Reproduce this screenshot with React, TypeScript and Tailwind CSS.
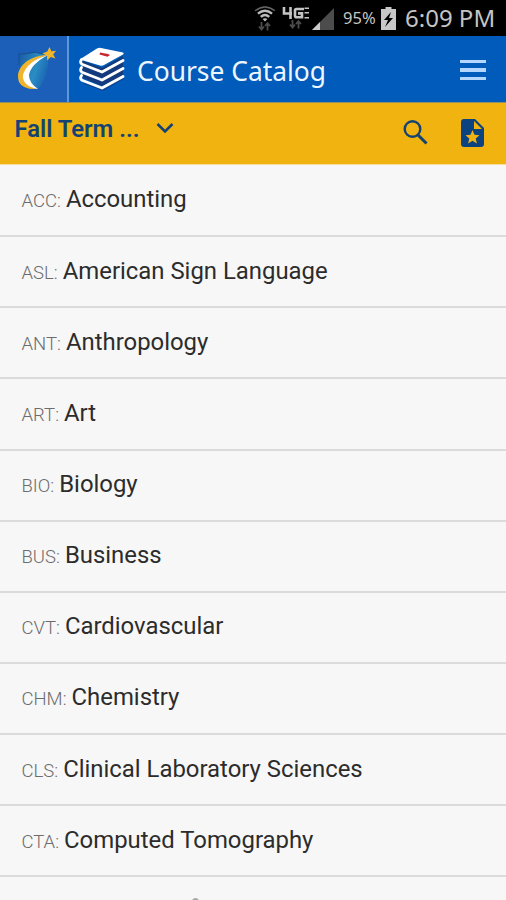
const subjects = [
  { code: 'ACC', name: 'Accounting' },
  { code: 'ASL', name: 'American Sign Language' },
  { code: 'ANT', name: 'Anthropology' },
  { code: 'ART', name: 'Art' },
  { code: 'BIO', name: 'Biology' },
  { code: 'BUS', name: 'Business' },
  { code: 'CVT', name: 'Cardiovascular' },
  { code: 'CHM', name: 'Chemistry' },
  { code: 'CLS', name: 'Clinical Laboratory Sciences' },
  { code: 'CTA', name: 'Computed Tomography' },
];

function DataArrows({ className }: { className: string }) {
  return (
    <svg className={className} width="13" height="9" viewBox="0 0 13 9" fill="none" stroke="#4c4c4c" strokeWidth="1.8">
      <path d="M3.5 0v7M1 4.5 3.5 7.5 6 4.5M9.5 8.5v-7M7 4 9.5 1.2 12 4" />
    </svg>
  );
}

function StatusBar() {
  return (
    <div className="flex h-9 shrink-0 items-center bg-black pl-[252px] font-['Noto_Sans',sans-serif] text-[#c4c4c4]">
      <div className="flex h-[25px] w-[25px] flex-col items-center">
        <svg width="24" height="17" viewBox="0 0 24 17" fill="none" stroke="#bdbdbd">
          <path d="M1.5 5Q12-3 22.5 5" stroke="#666" strokeWidth="1.5" />
          <path d="M4.5 8.2Q12 2 19.5 8.2M7.5 11.5Q12 7.5 16.5 11.5" strokeWidth="2.5" />
          <path d="m9.5 13.8 2.5 2.7 2.5-2.7Q12 12 9.5 13.8Z" fill="#bdbdbd" stroke="none" />
        </svg>
        <DataArrows className="shrink-0" />
      </div>
      <div className="ml-1 flex h-[22px] w-[28px] flex-col items-center">
        <svg className="shrink-0" width="27" height="13" viewBox="0 0 27 13" fill="none" stroke="#c4c4c4" strokeWidth="2.6">
          <path d="M2 0v6.5h8M8.5 0v12M22 2h-7.5q-1.5 0-1.5 1.5v5q0 1.8 1.5 1.8H20V6.4h-4" />
          <path d="M22.5 1.2H27M22.5 5.8H27M22.5 10.8H27" strokeWidth="1.5" />
        </svg>
        <DataArrows className="shrink-0" />
      </div>
      <svg className="mt-px ml-[2px]" width="24" height="24" viewBox="0 0 24 24">
        <path d="M23 1v22H1Z" fill="#4c4c4c" />
        <path d="M9 15v8H1Z" fill="#ccc" />
      </svg>
      <span className="ml-[8px] w-[36px] whitespace-nowrap text-[16.5px] leading-9">95%</span>
      <svg className="ml-[2px]" width="15" height="23" viewBox="0 0 15 23">
        <path d="M4.5 0h6v2H15v21H0V2h4.5Z" fill="#c8c8c8" />
        <path d="m10 5-7 8h4l-3 7 8-9H8Z" fill="#000" />
      </svg>
      <span className="ml-[9px] whitespace-nowrap text-[24px] leading-9">6:09 PM</span>
    </div>
  );
}

function CollegeLogo() {
  return (
    <svg width="42" height="46" viewBox="0 0 42 46">
      <defs>
        <linearGradient id="shield" x1="0" y1="0" x2="1" y2="0.4">
          <stop offset="0" stopColor="#1a5aa4" />
          <stop offset="0.65" stopColor="#2a8dc4" />
          <stop offset="1" stopColor="#1c68b4" />
        </linearGradient>
      </defs>
      <path d="M4 8Q14 8 20 6q6 2 13 2 2 22-10 35Q4 36 4 8Z" fill="url(#shield)" />
      <path d="M4 19V8Q13 8 20 6q5 2 10 2" fill="none" stroke="#174f8c" strokeWidth="1" />
      <path d="M33 9Q13 14 10 30q0 10 13 13Q8 44 4 36C-1 22 14 9 33 9Z" fill="#f0b52a" />
      <path d="M33 9Q12 15 8 29q-1 11 15 14-9-6-9-14Q16 18 33 9Z" fill="#fff" />
      <path d="m34.5 1 1.9 4.2 4.6-.5-2.8 3.8 2.2 4.1-4.6-1.6-3.6 3.5-.3-4.9-4.5-2.2 4.9-1.8Z" fill="#f0b52a" />
    </svg>
  );
}

function BooksIcon() {
  return (
    <svg width="48" height="46" viewBox="0 0 48 46">
      <path d="M5 35 24 43 46 30v3L25 45 6 38Z" fill="#0b4493" />
      <path d="M3 14 24 22 45 10v20L24 40 5 32Z" fill="#133a7c" />
      {[0, 8, 16].map((y) => (
        <path
          key={y}
          d="M3.5 13.5q-2 3 .5 4.8L24 26 45 14.5"
          transform={`translate(0 ${y})`}
          fill="none"
          stroke="#fff"
          strokeWidth="2.8"
          strokeLinecap="round"
          strokeLinejoin="round"
        />
      ))}
      <path d="M4 12 19 2.5q2-1 4-.5l22 4.5q1.500 1 0 2L26 19q-2 1-4 .4L3.500 14q-1-1 .5-2Z" fill="#fff" />
      <path d="m22 6.500 8 1.500 2 1-2.500 1.700-8-2.200Z" fill="#c9252f" />
    </svg>
  );
}

export default function App() {
  return (
    <div className="flex h-[900px] w-[506px] flex-col overflow-hidden bg-[#f7f7f7] font-['Roboto',sans-serif]">
      <StatusBar />
      <header className="flex h-[67px] shrink-0 items-center border-b border-[#8c8f68] bg-[#005bbb]">
        <div className="flex h-full w-[69px] items-center border-r-2 border-[#5c99dc] bg-[#1c5fb8] pl-[15px]">
          <CollegeLogo />
        </div>
        <div className="ml-[9px]">
          <BooksIcon />
        </div>
        <h1 className="mt-[3px] ml-[11px] whitespace-nowrap font-['Noto_Sans',sans-serif] text-[26.4px] leading-9 text-[#eef6ff]">Course Catalog</h1>
        <button className="mt-[2px] mr-5 ml-auto flex w-[26px] flex-col gap-[5px]" aria-label="Menu">
          <span className="h-[3.5px] w-full bg-[#b5d7ff]" />
          <span className="h-[3.5px] w-full bg-[#b5d7ff]" />
          <span className="h-[3.5px] w-full bg-[#b5d7ff]" />
        </button>
      </header>
      <div className="flex h-[62px] shrink-0 items-start border-b border-[#f7dfa0] bg-[#f0b310] text-[#134273]">
        <span className="mt-[11px] ml-[14.5px] whitespace-nowrap text-[23.8px] leading-[30px] font-semibold">Fall Term ...</span>
        <svg className="mt-[19px] ml-[17px]" width="18" height="12" viewBox="0 0 18 12" fill="none" stroke="currentColor" strokeWidth="2.5">
          <path d="m1.5 2 7.5 7.5L16.5 2" />
        </svg>
        <svg className="mt-[17px] mr-[33px] ml-auto" width="25" height="25" viewBox="0 0 25 25" fill="none" stroke="currentColor">
          <circle cx="9.500" cy="9" r="7.8" strokeWidth="2.4" />
          <path d="m15 15 8.500 8.500" strokeWidth="3" />
        </svg>
        <svg className="mt-[16px] mr-[22px]" width="23" height="28" viewBox="0 0 23 28">
          <path d="M3 0h11l9 9v16q0 3-3 3H3q-3 0-3-3V3q0-3 3-3Z" fill="#0b4380" />
          <path d="M13 2v8h8Z" fill="#f0b310" />
          <path d="m11.500 11 2 4.800 5 .4-3.800 3.300 1.200 5-4.400-2.700-4.400 2.700 1.200-5-3.800-3.300 5-.4Z" fill="#f0b310" />
        </svg>
      </div>
      <ul className="shrink-0 pt-px">
        {subjects.map(({ code, name }) => (
          <li key={code} className="flex h-[71.15px] items-baseline border-b-2 border-[#dbdbdb] pt-[18.4px] pl-[21.5px] whitespace-nowrap">
            <span className="mr-[5px] text-[18.5px] font-light text-[#6c6c6c]">{code}:</span>
            <span className="text-[23.9px] leading-[30px] text-[#2c2c2c]">{name}</span>
          </li>
        ))}
      </ul>
      <div className="mt-[21px] ml-[192px] h-2 w-[7px] shrink-0 rounded-t-full bg-[#aaa]" />
    </div>
  );
}
